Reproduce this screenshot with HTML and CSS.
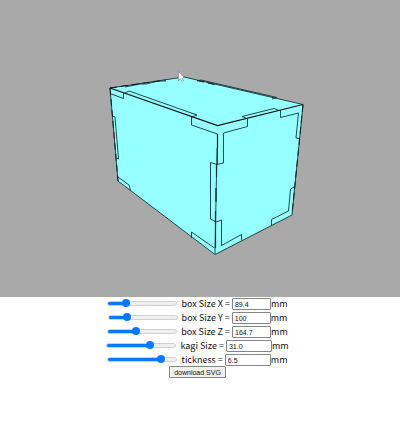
FILE: index.html
```html
<!DOCTYPE html>
<html lang="en">
<head>
<meta charset="utf-8">
<title>Box designer</title>
<link rel="stylesheet" href="styles.css">
</head>
<body>
<main>
  <div class="viewport">
    <svg class="scene" viewBox="0 0 400 297" role="img" aria-label="Box preview">
      <path class="solid" d="M110 88L184 77L303 104.500L292 215L215 254.500L118 181Z"/>
      <g class="fine">
        <path d="M110 88L184 77L303 104.500L292 215L215 254.500L118 181Z"/>
        <path d="M110 93.500L123.500 98.500V93"/>
        <path d="M125 93L129 91L197 115L192 117"/>
        <path d="M191.500 117V125L217.500 134V164"/>
        <path d="M247.500 118.500V126.500L223.500 133V163L217 164.500L210.500 162.500V219L216 222L221.500 220V245.500L241.500 234.500V240.500"/>
        <path d="M246 118L242 116.500L274 108.500L278 110"/>
        <path d="M280.500 110.500V117.500L298.500 113L296 138L299 138.500"/>
        <path d="M294 187L290.500 189L288.500 211L271.500 219.500V225"/>
        <path d="M112.500 116L115 117L118.500 159L116.500 158"/>
        <path d="M118 177L129 185L130.500 190"/>
        <path d="M191.500 238V232L214.500 248"/>
        <path d="M197 81L201 80L277 97.500L272 99"/>
        <path d="M125 87L140 84L146 84L158 81L166 81"/>
      </g>
      <path class="edge" d="M110 88L217.500 125.500L303 104.500"/>
      <path class="edge" d="M217.500 134V148M216.500 165V177M216 188V202M215.500 211V248"/>
      <path class="fine" d="M217 148L215 254"/>
      <path class="fine dashes" d="M110 88L118 181M303 105L292 214M110 88L166 80M197 80.500L216 85"/>
      <path class="pointer" d="M178.500 71.500V80.500L180.500 79L182 81.500L183.500 80.500L182 78.500L184 77.500Z"/>
    </svg>
  </div>
  <form class="controls">
    <div class="row">
      <input class="slider" type="range" aria-label="box Size X slider" min="0" max="100" value="22" style="--value:22">
      <label for="size-x">box Size X =</label>
      <input class="number" id="size-x" type="text" value="89.4"><span>mm</span>
    </div>
    <div class="row">
      <input class="slider" type="range" aria-label="box Size Y slider" min="0" max="100" value="24" style="--value:24">
      <label for="size-y">box Size Y =</label>
      <input class="number" id="size-y" type="text" value="100"><span>mm</span>
    </div>
    <div class="row">
      <input class="slider" type="range" aria-label="box Size Z slider" min="0" max="100" value="40" style="--value:40">
      <label for="size-z">box Size Z =</label>
      <input class="number" id="size-z" type="text" value="164.7"><span>mm</span>
    </div>
    <div class="row">
      <input class="slider" type="range" aria-label="kagi Size slider" min="0" max="100" value="64" style="--value:64">
      <label for="kagi">kagi Size =</label>
      <input class="number wide" id="kagi" type="text" value="31.0"><span>mm</span>
    </div>
    <div class="row">
      <input class="slider" type="range" aria-label="tickness slider" min="0" max="100" value="81" style="--value:81">
      <label for="tickness">tickness =</label>
      <input class="number wide" id="tickness" type="text" value="6.5"><span>mm</span>
    </div>
    <button class="download" type="button">download SVG</button>
  </form>
</main>
</body>
</html>
```
FILE: styles.css
```css
* {
  box-sizing: border-box;
}

body {
  margin: 0;
  background: #fff;
  color: #111;
  font-family: "Noto Sans CJK JP", "Noto Sans", sans-serif;
  font-size: 9px;
  line-height: 14px;
}

.viewport {
  background: #a9a9a9;
}

.scene {
  display: block;
  width: 100%;
}

.solid {
  fill: #96ffff;
}

.fine,
.edge {
  fill: none;
  stroke: #12363a;
  stroke-width: 0.9;
}

.edge {
  stroke: #081416;
  stroke-width: 1.2;
}

.dashes {
  stroke: #081416;
  stroke-dasharray: 7 4;
}

.pointer {
  fill: #fff;
  stroke: #777;
  stroke-width: 0.6;
}

.controls {
  display: flex;
  flex-direction: column;
  align-items: center;
  padding-right: 5px;
}

.row {
  display: flex;
  align-items: center;
  height: 14px;
}

.slider {
  appearance: none;
  width: 70px;
  height: 8px;
  margin: 0 4px 2px 0;
  background: transparent;
}

.slider::-webkit-slider-runnable-track {
  height: 5px;
  border: 1px solid #d0d0d0;
  border-radius: 3px;
  background: linear-gradient(#0a78fa, #0a78fa) 0 0 / calc(var(--value) * 1%) 100% no-repeat border-box #efefef;
}

.slider::-webkit-slider-thumb {
  appearance: none;
  width: 8px;
  height: 8px;
  margin-top: -3px;
  border-radius: 50%;
  background: #0a78fa;
}

.number {
  width: 39px;
  height: 12px;
  margin: 0 0 0 2px;
  padding: 0 2px;
  border: 1px solid #858585;
  border-radius: 1px;
  background: #fff;
  color: #111;
  font: 7px "Liberation Sans", sans-serif;
}

.wide {
  width: 46px;
}

.download {
  height: 12px;
  margin-top: -1px;
  padding: 0 4px;
  border: 1px solid #858585;
  border-radius: 1px;
  background: #efefef;
  color: #111;
  font: 7px "Liberation Sans", sans-serif;
}
```
